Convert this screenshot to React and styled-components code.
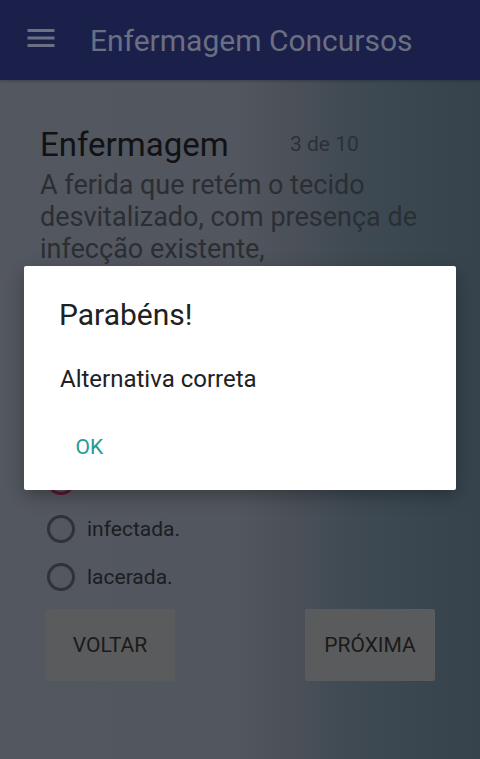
import React from "react";
import styled, { createGlobalStyle } from "styled-components";

const GlobalStyle = createGlobalStyle`
  html, body { margin: 0; padding: 0; }
  body {
    font-family: Roboto, "Noto Sans", "Liberation Sans", sans-serif;
    background: #53575f;
  }
  #root { min-height: 759px; }
  * { box-sizing: border-box; }
`;

const Screen = styled.div`
  position: relative;
  width: 480px;
  height: 759px;
  overflow: hidden;
  display: flex;
  flex-direction: column;
  background: linear-gradient(
    to right,
    #53575f 0%,
    #52565e 50%,
    #4a5058 62%,
    #3f4a53 73%,
    #36434c 100%
  );
`;

const AppBar = styled.header`
  height: 80px;
  flex: 0 0 80px;
  display: flex;
  align-items: center;
  background: #1b204b;
  box-shadow: 0 1px 3px rgba(0, 0, 0, 0.25);
`;

const MenuButton = styled.div`
  width: 36px;
  height: 36px;
  margin-left: 23px;
  margin-bottom: 5px;
  display: flex;
  align-items: center;
  justify-content: center;
  color: #6b7083;
`;

const AppTitle = styled.h1`
  margin: 0 0 0 31px;
  font-size: 30px;
  font-weight: 400;
  color: #6a6f82;
  line-height: normal;
`;

const Content = styled.main`
  flex: 1;
  padding: 45px 40px 0 40px;
  display: flex;
  flex-direction: column;
`;

const Header = styled.div`
  display: grid;
  grid-template-columns: 250px auto;
  align-items: start;
`;

const Subject = styled.h2`
  margin: 0;
  font-size: 33px;
  font-weight: 400;
  color: #111214;
  line-height: normal;
`;

const Counter = styled.span`
  margin-top: 6.5px;
  font-size: 21px;
  color: #2d3035;
  line-height: normal;
`;

const Question = styled.p`
  margin: 5px 0 0 0;
  font-size: 27px;
  color: #2b2e33;
  line-height: normal;
`;

const Options = styled.div`
  margin-top: 16px;
  display: flex;
  flex-direction: column;
`;

const OptionRow = styled.label`
  height: 48px;
  display: flex;
  align-items: center;
  font-size: 21px;
  color: #1b1d20;
`;

const RadioCircle = styled.span`
  position: relative;
  width: 28px;
  height: 28px;
  margin-left: 7px;
  margin-right: 12px;
  border-radius: 50%;
  border: 3px solid ${(p) => (p.$checked ? "#5e1530" : "#2f3236")};
  flex: 0 0 28px;

  &::after {
    content: "";
    display: ${(p) => (p.$checked ? "block" : "none")};
    position: absolute;
    left: 5px;
    top: 5px;
    width: 12px;
    height: 12px;
    border-radius: 50%;
    background: #5e1530;
  }
`;

const ButtonRow = styled.div`
  margin-top: 8px;
  padding: 0 5px;
  display: flex;
  justify-content: space-between;
`;

const NavButton = styled.div`
  width: 130px;
  height: 72px;
  display: flex;
  align-items: center;
  justify-content: center;
  background: #5a5b5c;
  border-radius: 2px;
  font-size: 21px;
  color: #1a1a1a;
  text-transform: uppercase;
`;

const Dialog = styled.div`
  position: absolute;
  left: 24px;
  top: 266px;
  width: 432px;
  height: 224px;
  background: #ffffff;
  border-radius: 2px;
  box-shadow: 0 6px 18px rgba(0, 0, 0, 0.3);
  padding: 31px 36px 0 36px;
  display: flex;
  flex-direction: column;
  align-items: flex-start;
`;

const DialogTitle = styled.h3`
  margin: 0 0 0 -1px;
  font-size: 30px;
  font-weight: 400;
  color: #212121;
  line-height: normal;
`;

const DialogBody = styled.p`
  margin: 33px 0 0 0;
  font-size: 24px;
  color: #212121;
  line-height: normal;
`;

const DialogAction = styled.div`
  margin: 42px 0 0 15.5px;
  font-size: 21px;
  color: #1f9c91;
  text-transform: uppercase;
  line-height: normal;
`;

const options = [
  "limpa.",
  "limpa-contaminada.",
  "crônica.",
  "contaminada.",
  "infectada.",
  "lacerada.",
];

export default function App() {
  const checked = 3;
  return (
    <>
      <GlobalStyle />
      <Screen>
        <AppBar>
          <MenuButton>
            <svg width="36" height="36" viewBox="0 0 24 24" fill="currentColor">
              <path d="M3 18h18v-2H3v2zm0-5h18v-2H3v2zm0-7v2h18V6H3z" />
            </svg>
          </MenuButton>
          <AppTitle>Enfermagem Concursos</AppTitle>
        </AppBar>
        <Content>
          <Header>
            <Subject>Enfermagem</Subject>
            <Counter>3 de 10</Counter>
          </Header>
          <Question>
            A ferida que retém o tecido desvitalizado, com presença de infecção existente,
            <br />é classificada como:
          </Question>
          <Options>
            {options.map((o, i) => (
              <OptionRow key={o}>
                <RadioCircle $checked={i === checked} />
                {o}
              </OptionRow>
            ))}
          </Options>
          <ButtonRow>
            <NavButton>Voltar</NavButton>
            <NavButton>Próxima</NavButton>
          </ButtonRow>
        </Content>
        <Dialog role="dialog">
          <DialogTitle>Parabéns!</DialogTitle>
          <DialogBody>Alternativa correta</DialogBody>
          <DialogAction>OK</DialogAction>
        </Dialog>
      </Screen>
    </>
  );
}
